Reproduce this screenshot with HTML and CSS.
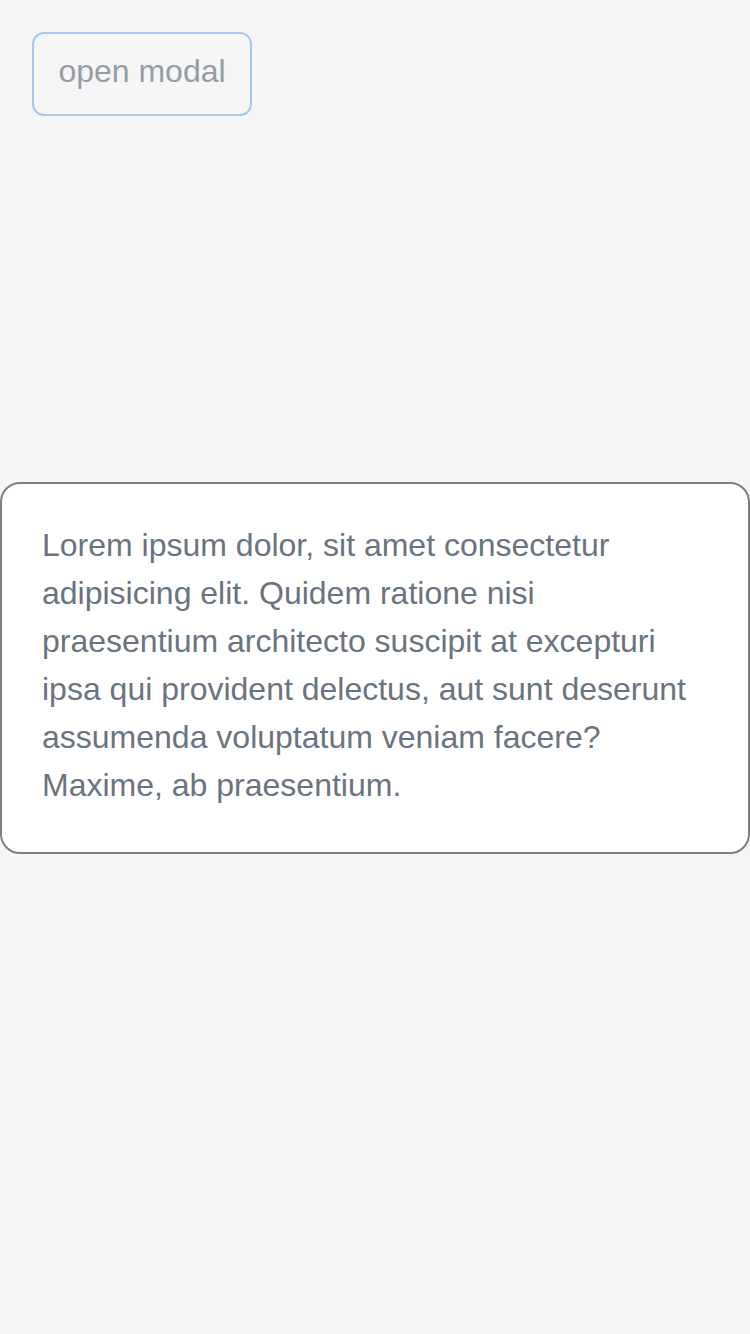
FILE: index.html
```html
<!DOCTYPE html>
<html>
<head>
<meta charset="utf-8">
<link rel="stylesheet" href="styles.css">
</head>
<body>
<div class="page">
  <button class="open-btn">open modal</button>
</div>
<div class="modal">
  <p class="modal-text">Lorem ipsum dolor, sit amet consectetur adipisicing elit. Quidem ratione nisi praesentium architecto suscipit at excepturi ipsa qui provident delectus, aut sunt deserunt assumenda voluptatum veniam facere? Maxime, ab praesentium.</p>
</div>
</body>
</html>
```

FILE: styles.css
```css
html, body {
  margin: 0;
  padding: 0;
  background: #f6f6f6;
  font-family: "Liberation Sans", Arial, sans-serif;
  height: 1334px;
  overflow: hidden;
}
.page {
  padding: 32px;
}
.open-btn {
  box-sizing: border-box;
  width: 220px;
  height: 84px;
  border: 2px solid #a9c9ea;
  border-radius: 12px;
  background: transparent;
  color: #959da6;
  font-family: "Liberation Sans", Arial, sans-serif;
  font-size: 32px;
  line-height: 40px;
  padding: 0 0 6px 0;
}
.modal {
  position: absolute;
  left: 0;
  top: 482px;
  width: 750px;
  box-sizing: border-box;
  background: #ffffff;
  border: 2px solid #808080;
  border-radius: 20px;
  padding: 37px 40px 43px 40px;
}
.modal-text {
  margin: 0;
  color: #6a7480;
  font-size: 32px;
  line-height: 48px;
}
```
